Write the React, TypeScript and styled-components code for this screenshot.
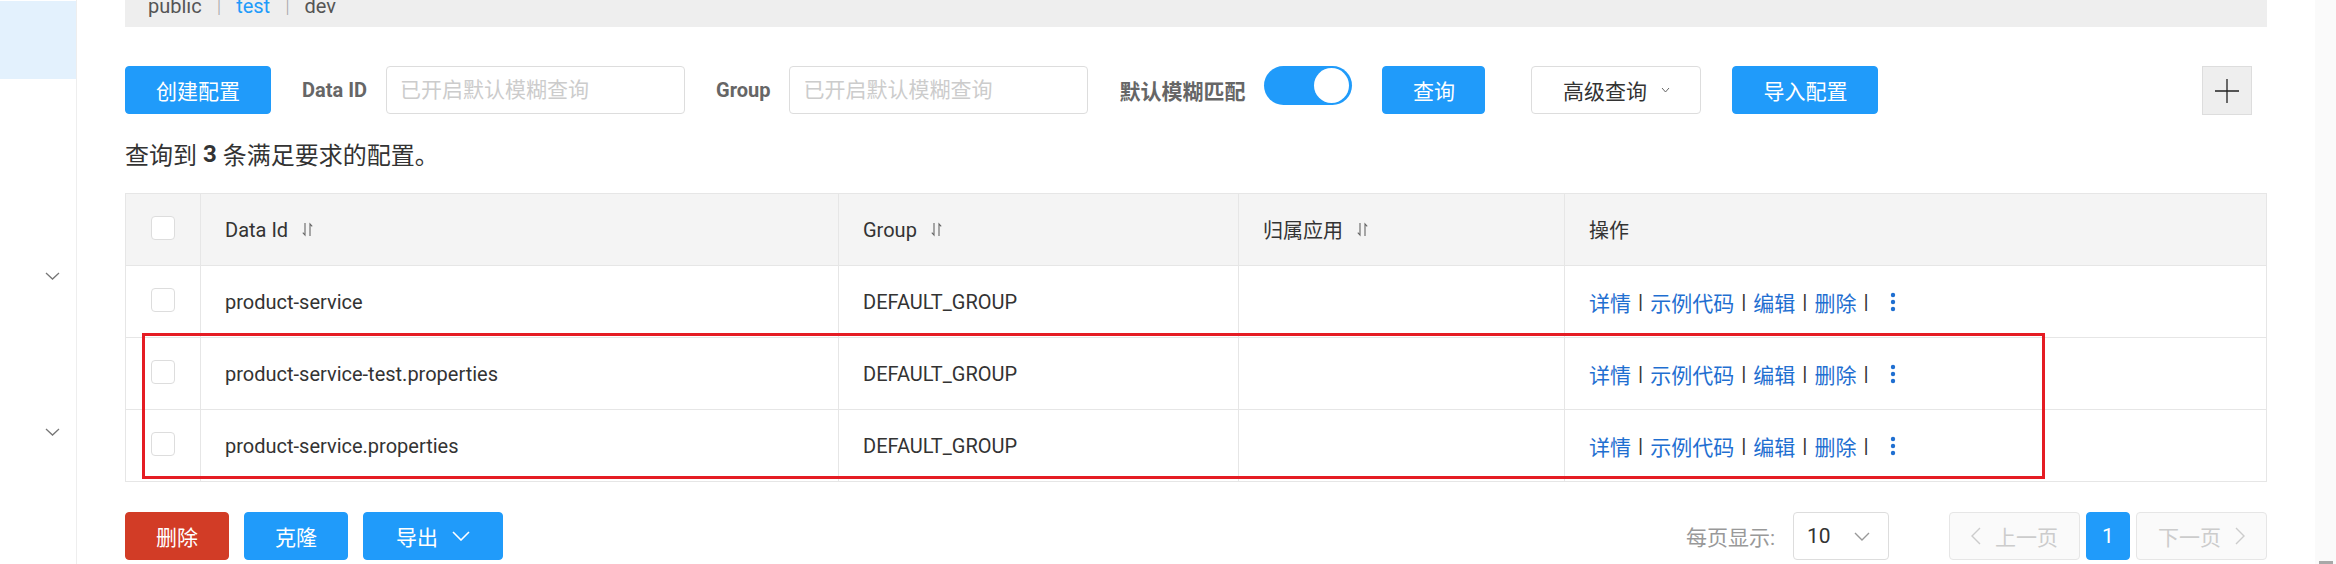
import React from "react";
import styled, { createGlobalStyle } from "styled-components";

const GlobalStyle = createGlobalStyle`
	html, body {
		margin: 0;
		padding: 0;
		background: #fff;
	}
	body {
		font-family: Roboto, "Noto Sans CJK SC", sans-serif;
		font-size: 20px;
		color: #333;
	}
	* {
		box-sizing: border-box;
	}
`;

const Page = styled.div`
	display: flex;
	width: 2336px;
	height: 564px;
	overflow: hidden;
`;

const Sidebar = styled.aside`
	width: 77px;
	flex-shrink: 0;
	border-right: 1px solid #eee;
	display: flex;
	flex-direction: column;
`;

const NavActive = styled.div`
	margin-top: 1px;
	height: 78px;
	background: #e3f1fd;
`;

const NavItem = styled.div<{ $h: number }>`
	height: ${(p) => p.$h}px;
	display: flex;
	align-items: center;
	justify-content: flex-end;
	padding-right: 16px;
	color: #777;
`;

const Main = styled.main`
	flex: 1;
	min-width: 0;
	padding: 0 48px;
	display: flex;
	flex-direction: column;
`;

const Scrollbar = styled.div`
	width: 21px;
	flex-shrink: 0;
	background: #fafafa;
	display: flex;
	flex-direction: column;
	justify-content: flex-end;
`;

const ScrollThumb = styled.div`
	height: 3px;
	margin: 0 3px 0 4px;
	background: #a8a8a8;
`;

/* namespace bar, cut by the scroll */
const NamespaceBar = styled.div`
	height: 27px;
	background: #eee;
	overflow: hidden;
	padding-left: 23px;
`;

const NamespaceLine = styled.div`
	margin-top: -8px;
	line-height: 28px;
	font-size: 20px;
	color: #555;
	display: flex;
`;

const Namespace = styled.span<{ $active?: boolean }>`
	color: ${(p) => (p.$active ? "#209bfa" : "#555")};
`;

const NsSep = styled.span`
	color: #aaa;
	margin: 0 15px;
	font-weight: 300;
`;

/* toolbar */
const Toolbar = styled.div`
	display: flex;
	align-items: center;
	margin-top: 39px;
	height: 48px;
`;

const Button = styled.button<{
	$variant?: "primary" | "normal" | "danger";
	$w: number;
	$mr?: number;
}>`
	height: 48px;
	width: ${(p) => p.$w}px;
	margin-right: ${(p) => p.$mr ?? 0}px;
	flex-shrink: 0;
	border-radius: 4px;
	font-family: inherit;
	font-size: 21px;
	display: flex;
	align-items: center;
	justify-content: center;
	gap: 14px;
	cursor: pointer;
	padding: 0;
	border: 1px solid
		${(p) =>
			p.$variant === "normal"
				? "#ddd"
				: p.$variant === "danger"
				? "#d23c26"
				: "#209bfa"};
	background: ${(p) =>
		p.$variant === "normal"
			? "#fff"
			: p.$variant === "danger"
			? "#d23c26"
			: "#209bfa"};
	color: ${(p) => (p.$variant === "normal" ? "#333" : "#fff")};
`;

const FieldLabel = styled.label<{ $cjk?: boolean }>`
	font-weight: 700;
	color: #666;
	margin: 0 19px 0 31px;
	white-space: nowrap;
	font-size: ${(p) => (p.$cjk ? 21 : 20)}px;
`;

const SearchInput = styled.input`
	width: 299px;
	height: 48px;
	flex-shrink: 0;
	border: 1px solid #ddd;
	border-radius: 4px;
	padding: 0 13px;
	font-family: inherit;
	font-size: 21px;
	color: #333;
	outline: none;

	&::placeholder {
		color: #ccc;
	}
`;

const Switch = styled.div<{ $on: boolean }>`
	align-self: flex-start;
	width: 88px;
	height: 39px;
	border-radius: 20px;
	background: ${(p) => (p.$on ? "#209bfa" : "#ccc")};
	display: flex;
	align-items: center;
	justify-content: ${(p) => (p.$on ? "flex-end" : "flex-start")};
	padding: 0 3px;
	margin-right: 30px;
	flex-shrink: 0;
`;

const Knob = styled.span`
	width: 35px;
	height: 35px;
	border-radius: 50%;
	background: #fff;
`;

const AddButton = styled.button`
	margin-left: auto;
	margin-right: 15px;
	width: 50px;
	height: 49px;
	align-self: flex-start;
	background: #eee;
	border: 1px solid #ddd;
	display: flex;
	align-items: center;
	justify-content: center;
	padding: 0;
`;

const ResultTitle = styled.div`
	height: 79px;
	display: flex;
	align-items: center;
	font-size: 24px;
	color: #333;
	white-space: pre;

	b {
		font-weight: 700;
	}
`;

/* table */
const Table = styled.div`
	position: relative;
	border: 1px solid #e6e6e6;
	border-bottom: none;
`;

const Row = styled.div<{ $head?: boolean }>`
	display: grid;
	grid-template-columns: 75px 638px 400px 326px 1fr;
	height: 72px;
	border-bottom: 1px solid #e6e6e6;
	background: ${(p) => (p.$head ? "#f4f4f4" : "#fff")};
`;

const Cell = styled.div`
	display: flex;
	align-items: center;
	padding-left: 24px;
	border-right: 1px solid #e6e6e6;
	white-space: nowrap;
	font-size: 20px;
	color: #333;

	&:last-child {
		border-right: none;
	}
`;

const CheckCell = styled(Cell)`
	justify-content: center;
	padding: 0 0 4px;
`;

const Checkbox = styled.span`
	width: 24px;
	height: 24px;
	border: 1px solid #ddd;
	border-radius: 4px;
	background: #fff;
`;

const SortIcon = styled.svg`
	margin-left: 14px;
`;

const Actions = styled.div`
	display: flex;
	align-items: center;
	font-size: 21px;
`;

const ActionLink = styled.a`
	color: #1f6fd1;
	text-decoration: none;
`;

const ActionSep = styled.span`
	color: #333;
	margin: 0 7px;
	font-size: 21px;
`;

const Highlight = styled.div`
	position: absolute;
	left: 16px;
	top: 139px;
	width: 1903px;
	height: 146px;
	border: 3px solid #e51c23;
	pointer-events: none;
`;

/* footer */
const Footer = styled.div`
	margin-top: 30px;
	height: 48px;
	display: flex;
	align-items: center;
	justify-content: space-between;
`;

const Group = styled.div<{ $gap: number }>`
	display: flex;
	align-items: center;
	gap: ${(p) => p.$gap}px;
`;

const PageSizeLabel = styled.span`
	color: #999;
	font-size: 21px;
	margin-right: 18px;
`;

const PageSizeSelect = styled.div`
	width: 96px;
	height: 48px;
	border: 1px solid #ddd;
	border-radius: 4px;
	display: flex;
	align-items: center;
	justify-content: space-between;
	padding: 0 18px 0 13px;
	font-size: 21px;
	color: #333;
	margin-right: 60px;
`;

const PagerButton = styled.div<{ $current?: boolean; $w: number }>`
	width: ${(p) => p.$w}px;
	height: 48px;
	border-radius: 4px;
	border: 1px solid ${(p) => (p.$current ? "#209bfa" : "#e6e6e6")};
	background: ${(p) => (p.$current ? "#209bfa" : "#fafafa")};
	color: ${(p) => (p.$current ? "#fff" : "#ccc")};
	display: flex;
	align-items: center;
	justify-content: center;
	gap: 14px;
	font-size: 21px;
	margin-right: 6px;

	&:last-child {
		margin-right: 0;
	}
`;

const Chevron = ({
	w = 15,
	h = 8,
	color = "#777",
	sw = 1.3,
	dir = "down",
}: {
	w?: number;
	h?: number;
	color?: string;
	sw?: number;
	dir?: "down" | "left" | "right";
}) => {
	if (dir === "down") {
		return (
			<svg width={w} height={h} viewBox={`0 0 ${w} ${h}`}>
				<path
					d={`M1 1 L${w / 2} ${h - 1} L${w - 1} 1`}
					fill="none"
					stroke={color}
					strokeWidth={sw}
				/>
			</svg>
		);
	}
	const d =
		dir === "left"
			? `M${w - 1} 1 L1 ${h / 2} L${w - 1} ${h - 1}`
			: `M1 1 L${w - 1} ${h / 2} L1 ${h - 1}`;
	return (
		<svg width={w} height={h} viewBox={`0 0 ${w} ${h}`}>
			<path d={d} fill="none" stroke={color} strokeWidth={sw} />
		</svg>
	);
};

const Sort = () => (
	<SortIcon width="11" height="15" viewBox="0 0 11 15">
		<path d="M3 1 V13 L0.8 10.6" fill="none" stroke="#666" strokeWidth="1.1" />
		<path d="M8 14 V2 L10.2 4.4" fill="none" stroke="#666" strokeWidth="1.1" />
	</SortIcon>
);

const Kebab = () => (
	<svg width="6" height="20" viewBox="0 0 6 20" style={{ marginLeft: 14 }}>
		<circle cx="3" cy="3" r="2.2" fill="#1f6fd1" />
		<circle cx="3" cy="10" r="2.2" fill="#1f6fd1" />
		<circle cx="3" cy="17" r="2.2" fill="#1f6fd1" />
	</svg>
);

const configs = [
	"product-service",
	"product-service-test.properties",
	"product-service.properties",
];

const actionNames = ["详情", "示例代码", "编辑", "删除"];

const App = () => {
	return (
		<Page>
			<GlobalStyle />
			<Sidebar>
				<NavActive />
				<NavItem $h={119} />
				<NavItem $h={156}>
					<Chevron />
				</NavItem>
				<NavItem $h={156}>
					<Chevron />
				</NavItem>
			</Sidebar>

			<Main>
				<NamespaceBar>
					<NamespaceLine>
						<Namespace>public</Namespace>
						<NsSep>|</NsSep>
						<Namespace $active>test</Namespace>
						<NsSep>|</NsSep>
						<Namespace>dev</Namespace>
					</NamespaceLine>
				</NamespaceBar>

				<Toolbar>
					<Button $w={146}>创建配置</Button>
					<FieldLabel>Data ID</FieldLabel>
					<SearchInput placeholder="已开启默认模糊查询" />
					<FieldLabel>Group</FieldLabel>
					<SearchInput placeholder="已开启默认模糊查询" />
					<FieldLabel $cjk>默认模糊匹配</FieldLabel>
					<Switch $on>
						<Knob />
					</Switch>
					<Button $w={103} $mr={46}>
						查询
					</Button>
					<Button $variant="normal" $w={170} $mr={31}>
						高级查询
						<Chevron w={9} h={6} color="#666" sw={1} />
					</Button>
					<Button $w={146}>导入配置</Button>
					<AddButton>
						<svg width="24" height="24" viewBox="0 0 24 24">
							<path d="M12 0 V24 M0 12 H24" stroke="#222" strokeWidth="1.3" />
						</svg>
					</AddButton>
				</Toolbar>

				<ResultTitle>
					查询到 <b>3</b> 条满足要求的配置。
				</ResultTitle>

				<Table>
					<Row $head>
						<CheckCell>
							<Checkbox />
						</CheckCell>
						<Cell>
							Data Id
							<Sort />
						</Cell>
						<Cell>
							Group
							<Sort />
						</Cell>
						<Cell>
							归属应用
							<Sort />
						</Cell>
						<Cell>操作</Cell>
					</Row>
					{configs.map((id) => (
						<Row key={id}>
							<CheckCell>
								<Checkbox />
							</CheckCell>
							<Cell>{id}</Cell>
							<Cell>DEFAULT_GROUP</Cell>
							<Cell />
							<Cell>
								<Actions>
									{actionNames.map((name) => (
										<React.Fragment key={name}>
											<ActionLink href="#">{name}</ActionLink>
											<ActionSep>|</ActionSep>
										</React.Fragment>
									))}
									<Kebab />
								</Actions>
							</Cell>
						</Row>
					))}
					<Highlight />
				</Table>

				<Footer>
					<Group $gap={15}>
						<Button $variant="danger" $w={104}>
							删除
						</Button>
						<Button $w={104}>克隆</Button>
						<Button $w={140}>
							导出
							<Chevron w={18} h={10} color="#fff" sw={1.6} />
						</Button>
					</Group>
					<Group $gap={0}>
						<PageSizeLabel>每页显示:</PageSizeLabel>
						<PageSizeSelect>
							10
							<Chevron w={16} h={9} color="#999" sw={1.4} />
						</PageSizeSelect>
						<PagerButton $w={131}>
							<Chevron dir="left" w={10} h={18} color="#ccc" sw={1.4} />
							上一页
						</PagerButton>
						<PagerButton $current $w={44}>
							1
						</PagerButton>
						<PagerButton $w={131}>
							下一页
							<Chevron dir="right" w={10} h={18} color="#ccc" sw={1.4} />
						</PagerButton>
					</Group>
				</Footer>
			</Main>

			<Scrollbar>
				<ScrollThumb />
			</Scrollbar>
		</Page>
	);
};

export default App;
